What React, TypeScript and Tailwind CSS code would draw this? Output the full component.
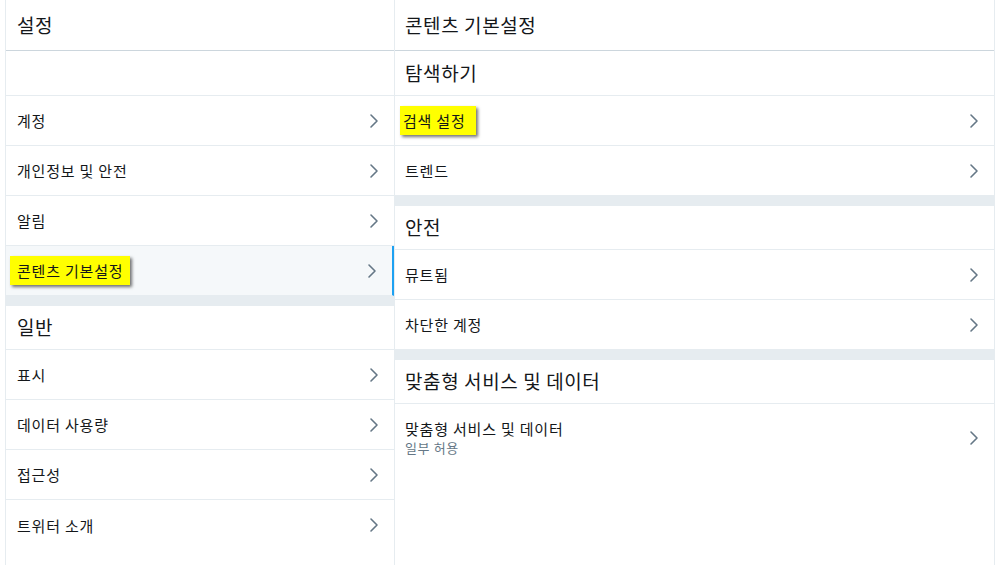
import React from "react";

const font = { fontFamily: '"Noto Sans CJK KR", "Noto Sans", sans-serif' };

function Chevron() {
  return (
    <svg width="10" height="16" viewBox="0 0 10 16" className="shrink-0">
      <path d="M2 2 L8 8 L2 14" fill="none" stroke="#657786" strokeWidth="1.6" strokeLinecap="round" strokeLinejoin="round" />
    </svg>
  );
}

function Row({ children, selected = false, last = false }: { children: React.ReactNode; selected?: boolean; last?: boolean }) {
  return (
    <div
      className={
        "flex items-center justify-between h-[50px] pl-[11px] pr-[15px] text-[15px] tracking-[0.8px] text-[#14171a] " +
        (last ? "" : "border-b border-[#e6ecf0] ") +
        (selected ? "bg-[#f5f8fa] border-r-2 border-r-[#1da1f2] pr-[13px]" : "")
      }
    >
      <div className="leading-none">{children}</div>
      <Chevron />
    </div>
  );
}

function RRow({ children }: { children: React.ReactNode }) {
  return (
    <div className="flex items-center justify-between h-[50px] pl-[10px] pr-[15px] border-b border-[#e6ecf0] text-[15px] tracking-[0.8px] text-[#14171a]">
      <div className="leading-none">{children}</div>
      <Chevron />
    </div>
  );
}

function SectionHeader({ children, pl = "pl-[11px]", h = "h-[44px]" }: { children: React.ReactNode; pl?: string; h?: string }) {
  return (
    <div className={"flex items-center border-b border-[#e6ecf0] text-[19px] tracking-[0.6px] font-normal text-[#14171a] " + pl + " " + h}>
      {children}
    </div>
  );
}

function Gap() {
  return <div className="h-[10px] bg-[#e6ecf0]" />;
}

function Highlight({ children, cls }: { children: React.ReactNode; cls: string }) {
  return (
    <span className={"inline-block bg-[#ffff00] shadow-[2px_2px_3px_rgba(0,0,0,0.55)] " + cls}>{children}</span>
  );
}

export default function App() {
  return (
    <div className="w-[1000px] h-[565px] bg-white flex pl-[5px] overflow-hidden" style={font}>
      {/* Left column */}
      <div className="w-[390px] h-full border-l border-r border-[#e6ecf0] flex flex-col">
        <div className="h-[51px] flex items-center pl-[11px] border-b border-[#ccd6dd] text-[19px] tracking-[0.6px] font-normal text-[#14171a]">
          설정
        </div>
        <div className="h-[45px] border-b border-[#e6ecf0]" />
        <Row>계정</Row>
        <Row>개인정보 및 안전</Row>
        <Row>알림</Row>
        <Row selected>
          <Highlight cls="-ml-[7px] px-[7px] py-[7px]">콘텐츠 기본설정</Highlight>
        </Row>
        <Gap />
        <SectionHeader>일반</SectionHeader>
        <Row>표시</Row>
        <Row>데이터 사용량</Row>
        <Row>접근성</Row>
        <Row last>트위터 소개</Row>
      </div>

      {/* Right column */}
      <div className="w-[600px] h-full border-r border-[#e6ecf0] flex flex-col">
        <div className="h-[51px] flex items-center pl-[10px] border-b border-[#ccd6dd] text-[19px] tracking-[0.6px] font-normal text-[#14171a]">
          콘텐츠 기본설정
        </div>
        <SectionHeader pl="pl-[10px]" h="h-[45px]">탐색하기</SectionHeader>
        <RRow>
          <Highlight cls="-ml-[5px] pl-[3px] pr-[10px] py-[7px]">검색 설정</Highlight>
        </RRow>
        <RRow>트렌드</RRow>
        <Gap />
        <SectionHeader pl="pl-[10px]">안전</SectionHeader>
        <RRow>뮤트됨</RRow>
        <RRow>차단한 계정</RRow>
        <Gap />
        <SectionHeader pl="pl-[10px]">맞춤형 서비스 및 데이터</SectionHeader>
        <div className="flex items-center justify-between h-[67px] pl-[10px] pr-[15px]">
          <div className="flex flex-col">
            <span className="text-[15px] leading-[20px] tracking-[0.8px] text-[#14171a]">맞춤형 서비스 및 데이터</span>
            <span className="text-[13px] leading-[17px] tracking-[0.6px] text-[#657786]">일부 허용</span>
          </div>
          <Chevron />
        </div>
      </div>
    </div>
  );
}
